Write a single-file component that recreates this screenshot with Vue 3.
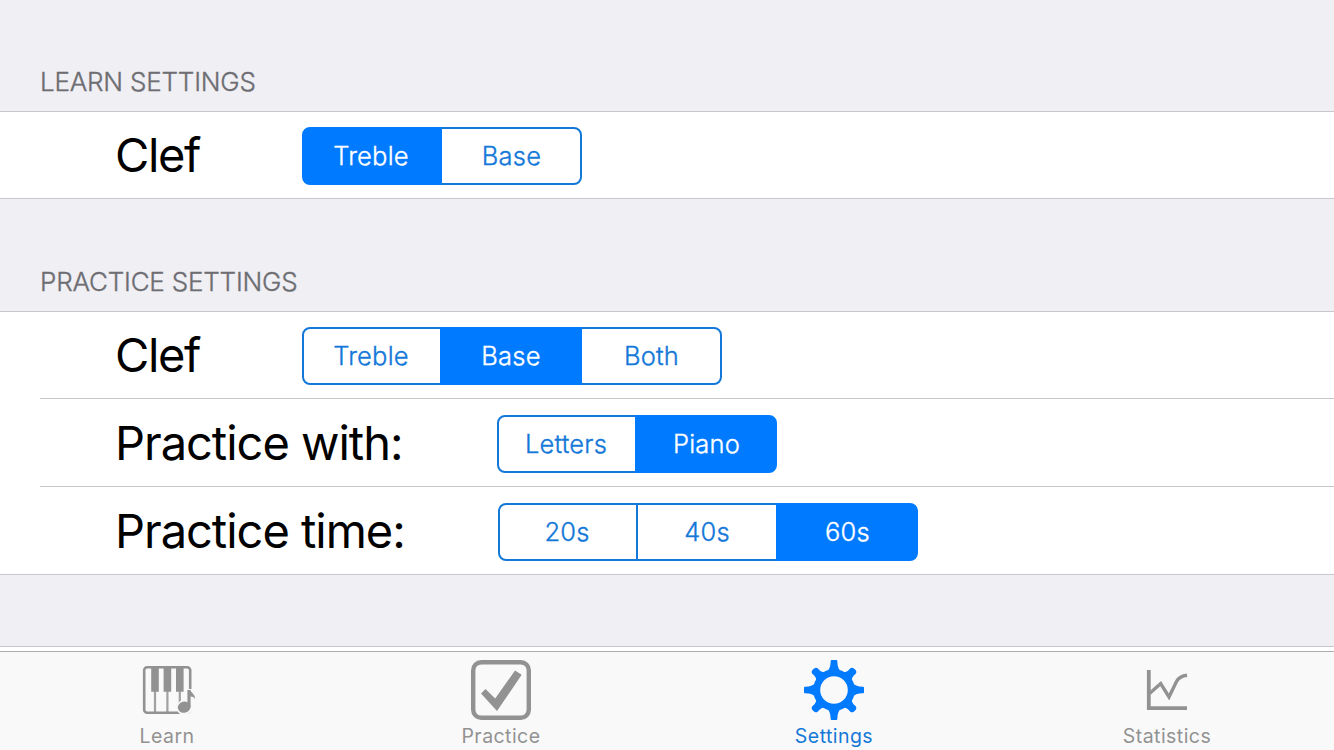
<script setup>
import { ref } from 'vue'

const groups = ref([
  {
    title: 'LEARN SETTINGS',
    rows: [{ label: 'Clef', kind: 'clef', options: ['Treble', 'Base'], selected: 0 }],
  },
  {
    title: 'PRACTICE SETTINGS',
    rows: [
      { label: 'Clef', kind: 'clef', options: ['Treble', 'Base', 'Both'], selected: 1 },
      { label: 'Practice with:', kind: 'input', options: ['Letters', 'Piano'], selected: 1 },
      { label: 'Practice time:', kind: 'time', options: ['20s', '40s', '60s'], selected: 2 },
    ],
  },
])
const tabs = ['Learn', 'Practice', 'Settings', 'Statistics']
const activeTab = ref('Settings')
const diagonals = [45, 135, 225, 315]
const straights = [0, 90, 180, 270]
</script>

<template>
  <div class="screen">
    <main class="settings">
      <section v-for="g in groups" :key="g.title" class="group">
        <h2 class="title">{{ g.title }}</h2>
        <div class="rows">
          <div v-for="r in g.rows" :key="r.label" class="row" :class="r.kind">
            <span class="label">{{ r.label }}</span>
            <div class="segmented">
              <button
                v-for="(o, i) in r.options"
                :key="o"
                class="segment"
                :class="{ selected: i === r.selected }"
                @click="r.selected = i"
              >{{ o }}</button>
            </div>
          </div>
        </div>
      </section>
      <div class="next-group"></div>
    </main>
    <nav class="tabbar">
      <button
        v-for="t in tabs"
        :key="t"
        class="tab"
        :class="[t.toLowerCase(), { active: t === activeTab }]"
        @click="activeTab = t"
      >
        <svg class="icon" viewBox="0 0 60 60" width="60" height="60">
          <g v-if="t === 'Learn'">
            <rect x="7.2" y="7.2" width="46" height="45.6" rx="3" fill="none" stroke="currentColor" stroke-width="2.6" />
            <path d="M18 8V52M30.4 8V52M42.8 8V45" stroke="currentColor" stroke-width="2.2" opacity=".85" />
            <path d="M14.2 7H21.8V31.7H14.2ZM26.6 7H34.2V31.7H26.6ZM39 7H46.6V31.7H39Z" fill="currentColor" />
            <path d="M50 29H56L59 34V41L56 41V48Q54 55 47 55Q39.5 54 40 47Q41 41 45 40.5L50 40Z" fill="#f9f9f9" />
            <ellipse cx="47.2" cy="47.2" rx="6.4" ry="5.6" transform="rotate(-15 47.2 47.2)" fill="currentColor" />
            <path d="M50.4 47V30H53.6C53.8 33 58.3 33.6 58 39.3C57 37.2 55.8 36.6 53.6 36.6V47Z" fill="currentColor" />
          </g>
          <g v-else-if="t === 'Practice'">
            <rect x="2.2" y="2.2" width="55.6" height="55.6" rx="8" fill="none" stroke="currentColor" stroke-width="4.4" />
            <path d="M10 33.5L14.5 29L24.2 38.5L44 10.5L50.7 14.8L26 51Z" fill="currentColor" />
          </g>
          <g v-else-if="t === 'Settings'" fill="currentColor">
            <circle cx="30" cy="30" r="17.3" fill="none" stroke="currentColor" stroke-width="7" />
            <path v-for="a in straights" :key="a" d="M22.5 12Q26.6 9 26.7 1Q26.7 0 27.7 0H32.3Q33.3 0 33.3 1Q33.4 9 37.5 12Z" :transform="`rotate(${a} 30 30)`" />
            <path v-for="a in diagonals" :key="a" d="M23 12Q27 9 26.2 3.5Q26.2 .5 30 .5Q33.8 .5 33.8 3.5Q33 9 37 12Z" :transform="`rotate(${a} 30 30)`" />
          </g>
          <g v-else fill="none" stroke="currentColor">
            <path d="M11.8 10V48.1H50" stroke-width="3.8" />
            <path d="M12.5 33.5L23.7 23.5L32 37L39.5 21.5Q42.5 16 50 15.3" stroke-width="3.4" />
          </g>
        </svg>
        <span class="caption">{{ t }}</span>
      </button>
    </nav>
  </div>
</template>

<style>
body {
  margin: 0;
}
</style>

<style scoped>
.screen {
  width: 1334px;
  height: 750px;
  display: flex;
  flex-direction: column;
  overflow: hidden;
  background: #efeff4;
  font-family: Inter, "Liberation Sans", sans-serif;
}
.settings {
  flex: 1;
  display: flex;
  flex-direction: column;
}
.title {
  box-sizing: border-box;
  height: 112px;
  margin: 0;
  padding: 67px 0 0 40px;
  font-size: 26px;
  line-height: 32px;
  font-weight: 300;
  letter-spacing: -0.2px;
  -webkit-text-stroke: 0.35px currentColor;
  color: #6d6d72;
}
.group:first-child .title {
  height: 111px;
  padding-top: 66px;
}
.rows {
  border-top: 1px solid #c8c7cc;
  border-bottom: 1px solid #c8c7cc;
  background: #fff;
}
.row {
  box-sizing: border-box;
  height: 88px;
  margin-left: 40px;
  padding: 16px 0 0 75px;
  display: flex;
  align-items: flex-start;
}
.row:not(:last-child) {
  border-bottom: 1px solid #c8c7cc;
}
.row:first-child {
  height: 87px;
  padding-top: 15px;
}
.row:last-child {
  height: 87px;
}
.row:only-child {
  height: 86px;
}
.label {
  flex: none;
  width: 187px;
  font-size: 47px;
  line-height: 56px;
  letter-spacing: -1.02px;
  white-space: nowrap;
  color: #000;
}
.clef .label {
  letter-spacing: -1.4px;
}
.input .label {
  width: 382px;
}
.time .label {
  width: 383px;
}
.segmented {
  display: flex;
}
.segment {
  box-sizing: border-box;
  width: 142px;
  height: 58px;
  margin: 0 0 0 -2px;
  padding: 0;
  border: 2px solid #1478d8;
  background: transparent;
  color: #1478d8;
  font: 300 25.5px/54px Inter, "Liberation Sans", sans-serif;
  letter-spacing: 0.2px;
  -webkit-text-stroke: 0.35px currentColor;
  text-align: center;
}
.segment:first-child {
  width: 140px;
  margin-left: 0;
  padding-right: 2px;
  border-radius: 8px 0 0 8px;
}
.segment:last-child {
  padding-left: 1px;
  border-radius: 0 8px 8px 0;
}
.segment.selected {
  position: relative;
  background: #007aff;
  border-color: #007aff;
  color: #fff;
}
.next-group {
  height: 4px;
  margin-top: auto;
  border-top: 1px solid #c8c7cc;
  background: #fff;
}
.tabbar {
  box-sizing: border-box;
  height: 99px;
  border-top: 1px solid #adadb0;
  background: #f9f9f9;
  display: grid;
  grid-template-columns: 334px 334px 332px 334px;
}
.tab {
  display: flex;
  flex-direction: column;
  align-items: center;
  padding: 8px 0 0;
  border: 0;
  background: none;
  color: #929292;
  font: 400 19.5px/24px Inter, "Liberation Sans", sans-serif;
}
.icon {
  display: block;
  flex: none;
  overflow: visible;
}
.caption {
  margin-top: 4px;
  letter-spacing: 0.45px;
}
.tab.active {
  color: #1478d8;
}
.tab.active .icon {
  color: #007aff;
}
</style>
